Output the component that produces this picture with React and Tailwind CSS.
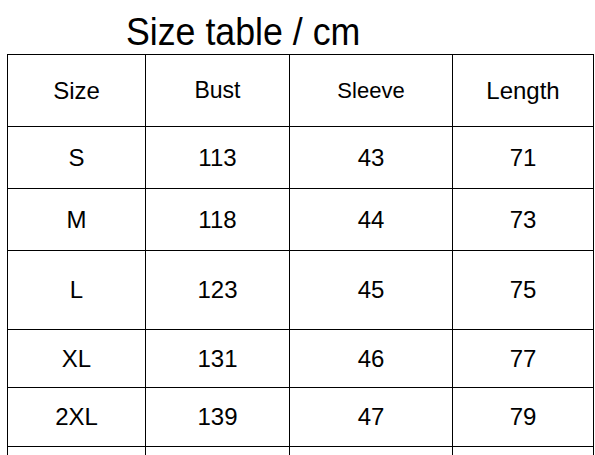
export default function App() {
  const rows = [
    ["S", "113", "43", "71", 62],
    ["M", "118", "44", "73", 62],
    ["L", "123", "45", "75", 79],
    ["XL", "131", "46", "77", 58],
    ["2XL", "139", "47", "79", 59],
    ["", "", "", "", 59],
  ];
  const cell = "border border-black text-center align-middle p-0 leading-none";
  return (
    <div className="w-[595px] h-[455px] overflow-hidden bg-white text-black" style={{ fontFamily: '"Liberation Sans", Arial, sans-serif' }}>
      <div className="h-[54px] pl-[126px] flex items-end">
        <h1 className="text-[38px] leading-none font-normal scale-x-[0.94] origin-left mb-[1px] pb-[2px]">Size table / cm</h1>
      </div>
      <table className="ml-[7px] border-collapse table-fixed" style={{ width: "586px" }}>
        <colgroup>
          <col className="w-[138px]" />
          <col className="w-[144px]" />
          <col className="w-[163px]" />
          <col className="w-[141px]" />
        </colgroup>
        <thead>
          <tr className="h-[72px]">
            <th className={cell + " font-normal text-[24px]"}>Size</th>
            <th className={cell + " font-normal text-[23px]"}>Bust</th>
            <th className={cell + " font-normal text-[22px]"}>Sleeve</th>
            <th className={cell + " font-normal text-[24px]"}>Length</th>
          </tr>
        </thead>
        <tbody>
          {rows.map((r, i) => (
            <tr key={i} style={{ height: r[4] + "px" }}>
              <td className={cell + " text-[24px]"}>{r[0]}</td>
              <td className={cell + " text-[24px]"}>{r[1]}</td>
              <td className={cell + " text-[24px]"}>{r[2]}</td>
              <td className={cell + " text-[24px]"}>{r[3]}</td>
            </tr>
          ))}
        </tbody>
      </table>
    </div>
  );
}
